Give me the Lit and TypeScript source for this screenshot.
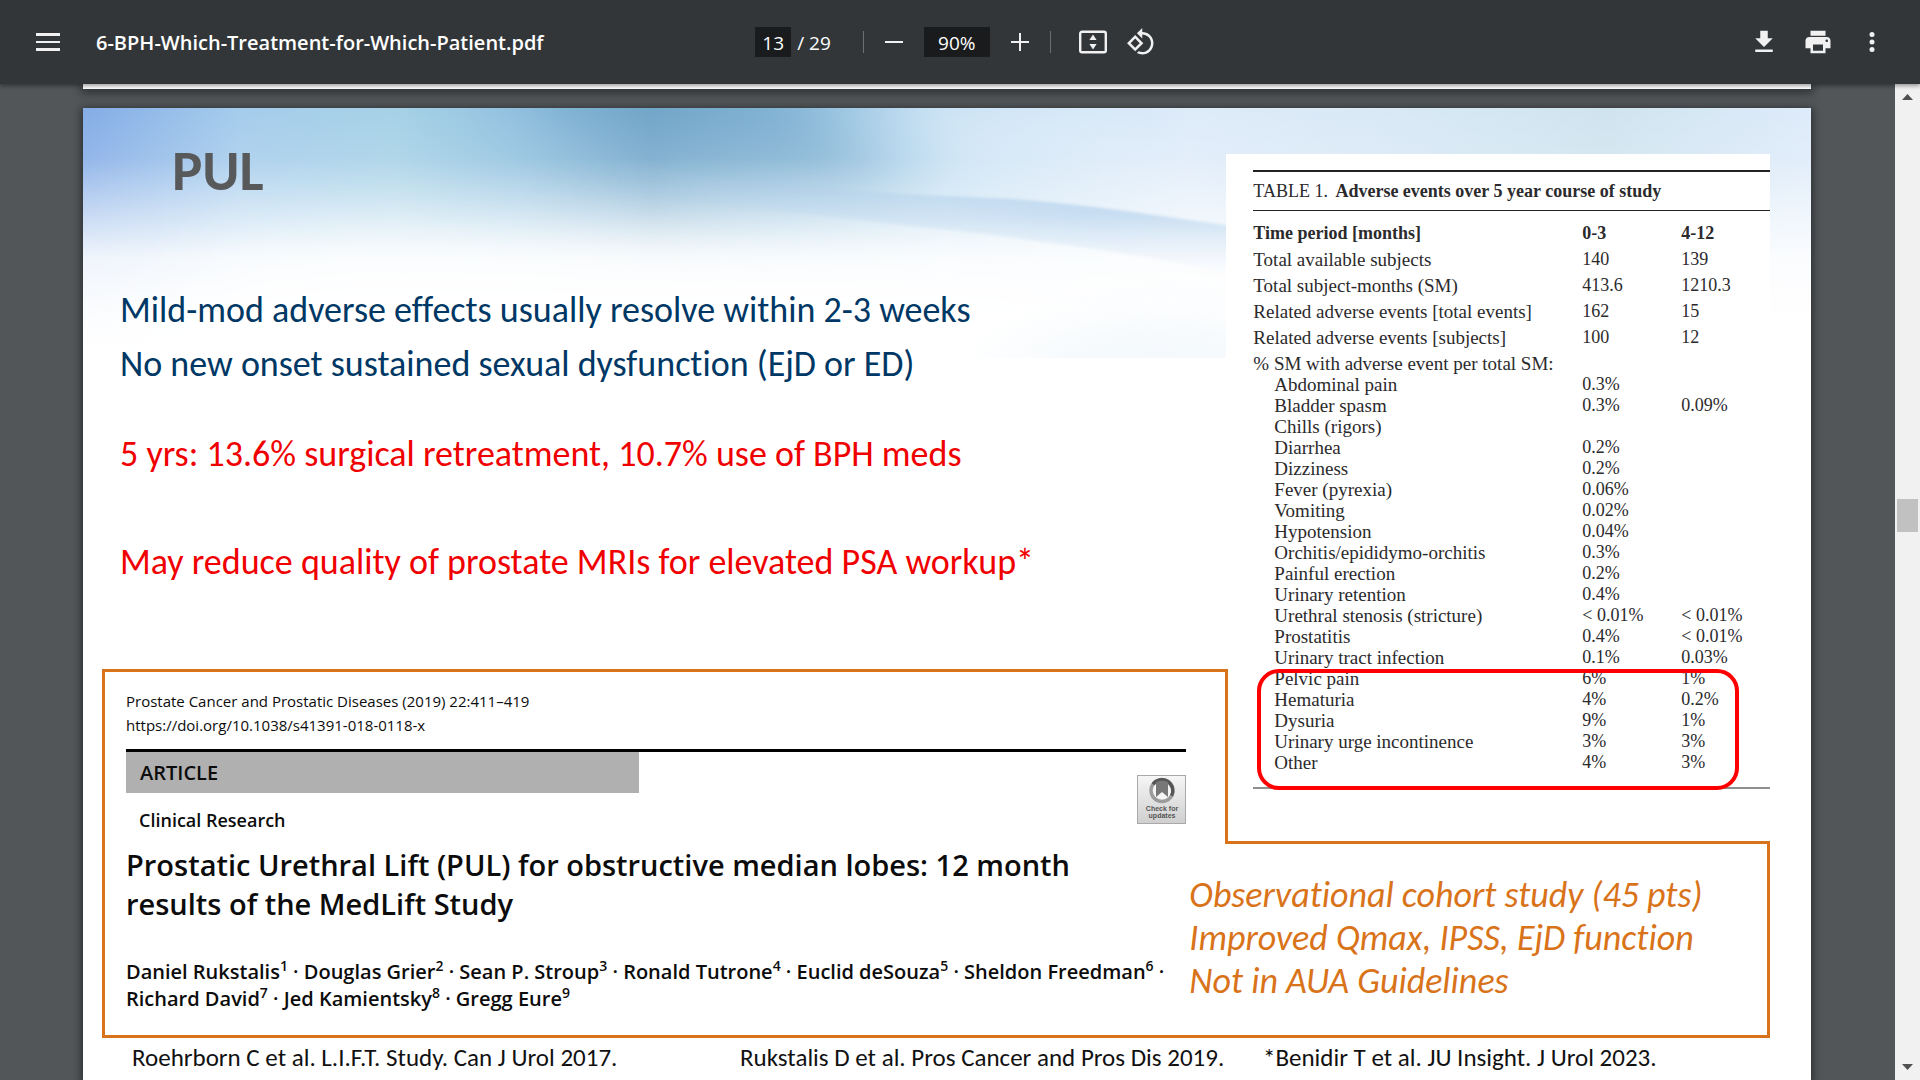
import { LitElement, html, css, svg } from "lit";
import { customElement, property } from "lit/decorators.js";

type Row = { label: string; early: string; late: string; kind: "wide" | "item" };

const wide = (label: string, early = "", late = ""): Row => ({ label, early, late, kind: "wide" });
const item = (label: string, early = "", late = ""): Row => ({ label, early, late, kind: "item" });

const ROWS: Row[] = [
  wide("Total available subjects", "140", "139"),
  wide("Total subject-months (SM)", "413.6", "1210.3"),
  wide("Related adverse events [total events]", "162", "15"),
  wide("Related adverse events [subjects]", "100", "12"),
  wide("% SM with adverse event per total SM:"),
  item("Abdominal pain", "0.3%"),
  item("Bladder spasm", "0.3%", "0.09%"),
  item("Chills (rigors)"),
  item("Diarrhea", "0.2%"),
  item("Dizziness", "0.2%"),
  item("Fever (pyrexia)", "0.06%"),
  item("Vomiting", "0.02%"),
  item("Hypotension", "0.04%"),
  item("Orchitis/epididymo-orchitis", "0.3%"),
  item("Painful erection", "0.2%"),
  item("Urinary retention", "0.4%"),
  item("Urethral stenosis (stricture)", "< 0.01%", "< 0.01%"),
  item("Prostatitis", "0.4%", "< 0.01%"),
  item("Urinary tract infection", "0.1%", "0.03%"),
  item("Pelvic pain", "6%", "1%"),
  item("Hematuria", "4%", "0.2%"),
  item("Dysuria", "9%", "1%"),
  item("Urinary urge incontinence", "3%", "3%"),
  item("Other", "4%", "3%"),
];

const AUTHORS = [
  ["Daniel Rukstalis", "Douglas Grier", "Sean P. Stroup", "Ronald Tutrone", "Euclid deSouza", "Sheldon Freedman"],
  ["Richard David", "Jed Kamientsky", "Gregg Eure"],
];

const ICONS = {
  menu: svg`<path d="M3 6h24v3H3zM3 14h24v2H3zM3 21h24v3H3z"/>`,
  minus: svg`<path d="M6 14h18v2H6z"/>`,
  plus: svg`<path d="M6 14h8V6h2v8h8v2h-8v8h-2v-8H6z"/>`,
  fit: svg`<rect x="2.2" y="4.7" width="25.6" height="20.6" rx="1.8" fill="none" stroke="currentColor" stroke-width="2.4"/><path d="M15 7.5l3.6 5.4h-7.2zM15 22.5l3.6-5.4h-7.2z"/>`,
  rotate: svg`<path transform="scale(1.25)" d="M7.34 6.41L.86 12.9l6.49 6.48 6.49-6.48-6.5-6.49zM3.69 12.9l3.66-3.66L11 12.9l-3.66 3.66-3.65-3.66zm15.67-6.26C17.61 4.88 15.3 4 13 4V.76L8.76 5 13 9.24V6c1.79 0 3.58.68 4.95 2.05 2.73 2.73 2.73 7.17 0 9.9C16.58 19.32 14.79 20 13 20c-.97 0-1.94-.21-2.84-.61l-1.49 1.49C10.02 21.62 11.51 22 13 22c2.3 0 4.61-.88 6.36-2.64 3.52-3.51 3.52-9.21 0-12.72z"/>`,
  download: svg`<path transform="scale(1.25)" d="M19 9h-4V3H9v6H5l7 7 7-7zM5 18v2h14v-2H5z"/>`,
  print: svg`<path transform="scale(1.25)" d="M19 8H5c-1.66 0-3 1.34-3 3v6h4v4h12v-4h4v-6c0-1.66-1.34-3-3-3zm-3 11H8v-5h8v5zm3-7c-.55 0-1-.45-1-1s.45-1 1-1 1 .45 1 1-.45 1-1 1zm-1-9H6v4h12V3z"/>`,
  more: svg`<circle cx="15" cy="7.5" r="2.5"/><circle cx="15" cy="15" r="2.5"/><circle cx="15" cy="22.5" r="2.5"/>`,
};

@customElement("viewer-toolbar")
export class ViewerToolbar extends LitElement {
  @property() name = "";

  static styles = css`
    :host {
      display: grid;
      grid-template-columns: 1fr auto 1fr;
      align-items: center;
      height: 84px;
      padding: 0 28px;
      box-sizing: border-box;
      background: #323639;
      color: #fff;
      font-family: "Open Sans", "Noto Sans", sans-serif;
      box-shadow: 0 -2px 8px rgba(0, 0, 0, 0.1), 0 2px 4px rgba(0, 0, 0, 0.35);
      z-index: 2;
    }
    .left,
    .middle,
    .right {
      display: flex;
      align-items: center;
    }
    .left {
      gap: 28px;
    }
    .middle {
      gap: 10px;
      padding-right: 4px;
    }
    .right {
      gap: 14px;
      justify-content: flex-end;
    }
    .name {
      margin: 0;
      padding-top: 2px;
      font-size: 20px;
      font-weight: 600;
      line-height: 30px;
      white-space: nowrap;
    }
    .button {
      display: grid;
      place-items: center;
      width: 40px;
      height: 40px;
      padding: 0;
      border: 0;
      border-radius: 50%;
      background: none;
      color: #f1f1f1;
    }
    .icon {
      width: 30px;
      height: 30px;
      fill: currentColor;
    }
    .pager {
      display: flex;
      align-items: center;
      gap: 6px;
      padding-right: 22px;
      font-size: 19px;
      line-height: 30px;
      white-space: nowrap;
    }
    .box {
      height: 30px;
      box-sizing: border-box;
      padding: 2px 0 0;
      border: 0;
      background: #191b1c;
      color: #fff;
      font: inherit;
      font-size: 19px;
      text-align: center;
    }
    .total {
      padding-top: 2px;
    }
    .page {
      width: 36px;
    }
    .zoom {
      width: 66px;
    }
    .rule {
      width: 1px;
      height: 22px;
      background: #6b6f72;
    }
    .view {
      display: flex;
      gap: 8px;
      padding-left: 12px;
    }
  `;

  private button(label: string, icon: unknown) {
    return html`<button class="button" type="button" aria-label=${label}>
      <svg class="icon" viewBox="0 0 30 30" aria-hidden="true">${icon}</svg>
    </button>`;
  }

  render() {
    return html`
      <div class="left">
        ${this.button("Menu", ICONS.menu)}
        <h1 class="name">${this.name}</h1>
      </div>
      <div class="middle">
        <div class="pager">
          <input class="box page" aria-label="Page number" value="13" />
          <span class="total">/ 29</span>
        </div>
        <span class="rule"></span>
        ${this.button("Zoom out", ICONS.minus)}
        <input class="box zoom" aria-label="Zoom level" value="90%" />
        ${this.button("Zoom in", ICONS.plus)}
        <span class="rule"></span>
        <div class="view">
          ${this.button("Fit to page", ICONS.fit)} ${this.button("Rotate counterclockwise", ICONS.rotate)}
        </div>
      </div>
      <div class="right">
        ${this.button("Download", ICONS.download)} ${this.button("Print", ICONS.print)}
        ${this.button("More actions", ICONS.more)}
      </div>
    `;
  }
}

@customElement("adverse-table")
export class AdverseTable extends LitElement {
  static styles = css`
    :host {
      display: block;
      position: relative;
      box-sizing: border-box;
      padding: 16px 0 0 27px;
      background: #fff;
      color: #2b2a2c;
      font-family: "Palatino Linotype", "Liberation Serif", serif;
      font-size: 18px;
      line-height: 21px;
    }
    .table {
      width: 100%;
      border-collapse: collapse;
      table-layout: fixed;
      border-bottom: 2px solid #8f8f8f;
    }
    .caption {
      padding: 8px 0;
      border-top: 2px solid #222;
      border-bottom: 1px solid #222;
      line-height: 22px;
      text-align: left;
      white-space: nowrap;
    }
    .title {
      padding-left: 3px;
      font-weight: 700;
    }
    .label {
      width: 329px;
    }
    .early {
      width: 99px;
    }
    .cell {
      padding: 0;
      font-weight: 400;
      text-align: left;
      white-space: nowrap;
    }
    .name {
      font-size: 19px;
    }
    .head .cell {
      padding-top: 12px;
      font-weight: 700;
    }
    .wide .cell {
      padding-top: 5px;
    }
    .item .name {
      padding-left: 21px;
    }
    .last .cell {
      padding-bottom: 14px;
    }
    .mark {
      position: absolute;
      left: 31px;
      right: 31px;
      top: 515px;
      height: 121px;
      box-sizing: border-box;
      border: 4px solid #f00;
      border-radius: 22px;
    }
  `;

  render() {
    return html`
      <table class="table">
        <caption class="caption">
          TABLE 1. <span class="title">Adverse events over 5 year course of study</span>
        </caption>
        <thead>
          <tr class="head">
            <th class="cell label" scope="col">Time period [months]</th>
            <th class="cell early" scope="col">0-3</th>
            <th class="cell" scope="col">4-12</th>
          </tr>
        </thead>
        <tbody>
          ${ROWS.map(
            (row, i) => html`<tr class="${row.kind} ${i === ROWS.length - 1 ? "last" : ""}">
              <th class="cell name" scope="row">${row.label}</th>
              <td class="cell">${row.early}</td>
              <td class="cell">${row.late}</td>
            </tr>`,
          )}
        </tbody>
      </table>
      <div class="mark"></div>
    `;
  }
}

@customElement("journal-article")
export class JournalArticle extends LitElement {
  static styles = css`
    :host {
      display: block;
      padding: 20px 3px 26px 22px;
      color: #0c0c0c;
      font-family: "Open Sans", "Noto Sans", sans-serif;
      font-variant-ligatures: none;
      white-space: nowrap;
    }
    .source {
      margin: 0 0 12px;
      font-size: 15px;
      line-height: 24px;
    }
    .link {
      color: inherit;
      text-decoration: none;
    }
    .band {
      display: grid;
      grid-template-columns: 36fr 35fr auto;
      border-top: 3px solid #000;
    }
    .kind {
      grid-column: 1;
      margin: 0;
      padding-left: 14px;
      background: #b0b0b0;
      font-size: 20px;
      font-weight: 600;
      line-height: 41px;
    }
    .section {
      grid-column: 1;
      margin: 15px 0 0;
      padding-left: 13px;
      font-size: 18px;
      font-weight: 600;
      line-height: 24px;
    }
    .badge {
      grid-column: 3;
      grid-row: 1 / 3;
      width: 49px;
      height: 49px;
      margin-top: 23px;
    }
    .title {
      margin: 13px 0 35px;
      font-size: 29px;
      font-weight: 600;
      line-height: 39px;
    }
    .authors {
      margin: 0;
      font-size: 20px;
      font-weight: 600;
      line-height: 27px;
    }
    .ref {
      font-size: 14px;
      line-height: 0;
      vertical-align: 8px;
    }
    .badge-text {
      font: 700 7px "Liberation Sans", sans-serif;
      fill: #555;
      text-anchor: middle;
    }
  `;

  render() {
    let n = 0;
    return html`
      <p class="source">
        Prostate Cancer and Prostatic Diseases (2019) 22:411–419<br />
        <a class="link" href="https://doi.org/10.1038/s41391-018-0118-x">https://doi.org/10.1038/s41391-018-0118-x</a>
      </p>
      <div class="band">
        <p class="kind">ARTICLE</p>
        <p class="section">Clinical Research</p>
        <svg class="badge" viewBox="0 0 49 49" role="img" aria-label="Check for updates">
          <defs>
            <linearGradient id="plate" x1="0" y1="0" x2="0" y2="1">
              <stop offset="0" stop-color="#f6f6f6" />
              <stop offset="1" stop-color="#cfcfcf" />
            </linearGradient>
          </defs>
          <rect x=".5" y=".5" width="48" height="48" fill="url(#plate)" stroke="#a9a9a9" />
          <circle cx="25" cy="15.5" r="11" fill="#f4f4f4" stroke="#9b9b9b" stroke-width="3.4" />
          <path d="M16 9.2A11 11 0 0 1 34.6 20.8" fill="none" stroke="#555" stroke-width="3.4" />
          <path d="M19 7q6-3 12 0v15l-6-5-6 5z" fill="#777" />
          <text class="badge-text" x="25" y="36">Check for</text>
          <text class="badge-text" x="25" y="43">updates</text>
        </svg>
      </div>
      <h3 class="title">
        Prostatic Urethral Lift (PUL) for obstructive median lobes: 12 month<br />results of the MedLift Study
      </h3>
      <p class="authors">
        ${AUTHORS.map(
          (line, l) => html`${l ? html`<br />` : ""}${line.map((who, i) => {
            n += 1;
            const last = l === AUTHORS.length - 1 && i === line.length - 1;
            return html`${who}<sup class="ref">${n}</sup>${last ? "" : " · "}`;
          })}`,
        )}
      </p>
    `;
  }
}

@customElement("slide-page")
export class SlidePage extends LitElement {
  static styles = css`
    :host {
      display: grid;
      position: relative;
      grid-template-columns: 2fr 38px 1fr;
      grid-template-rows: auto 172px auto auto;
      align-content: start;
      box-sizing: border-box;
      min-height: 972px;
      padding: 0 41px 0 21px;
      background: #fff;
      box-shadow: 0 2px 8px 2px rgba(0, 0, 0, 0.45);
      font-family: Carlito, Lato, sans-serif;
      font-variant-ligatures: none;
      white-space: nowrap;
    }
    .banner {
      position: absolute;
      inset: 0 0 auto 0;
      width: 100%;
      height: 250px;
    }
    .intro,
    .card,
    .article,
    .notes,
    .sources {
      position: relative;
    }
    .intro {
      grid-area: 1 / 1 / 2 / 3;
      padding: 36px 0 80px 16px;
    }
    .heading {
      margin: 0 0 85px;
      padding-left: 52px;
      color: #58595b;
      font-size: 57px;
      font-weight: 700;
      line-height: 54px;
    }
    .points {
      margin: 0;
      padding: 0;
      list-style: none;
      font-size: 36px;
      line-height: 54px;
      color: #003865;
    }
    .alert {
      margin-top: 36px;
      color: #f00000;
    }
    .alert + .alert {
      margin-top: 54px;
    }
    .card {
      grid-area: 1 / 3 / 3 / 4;
      align-self: start;
      margin: 46px 0 0 -1px;
    }
    .frame-a {
      grid-area: 2 / 1 / 4 / 3;
      margin-left: -2px;
      border: 3px solid #d9731a;
      border-right: 0;
    }
    .frame-b {
      grid-area: 2 / 3 / 3 / 4;
      position: relative;
      margin-left: -2px;
      border-left: 3px solid #d9731a;
    }
    .frame-c {
      grid-area: 3 / 3 / 4 / 4;
      margin-left: -2px;
      border: 3px solid #d9731a;
      border-left: 0;
    }
    .article {
      grid-area: 2 / 1 / 4 / 2;
    }
    .notes {
      grid-area: 3 / 2 / 4 / 4;
      margin: 0;
      padding-top: 33px;
      color: #d9731a;
      font-size: 36px;
      font-style: italic;
      line-height: 43px;
    }
    .sources {
      grid-area: 4 / 1 / 5 / 4;
      display: grid;
      grid-template-columns: 608fr 523fr 507fr;
      padding: 5px 0 0 28px;
      color: #111;
      font-size: 25px;
      line-height: 30px;
    }
  `;

  render() {
    return html`
      <svg class="banner" viewBox="0 0 1728 250" preserveAspectRatio="none" aria-hidden="true">
        <defs>
          <linearGradient id="sky">
            <stop offset="0" stop-color="#84ace6" />
            <stop offset=".09" stop-color="#a5ccec" />
            <stop offset=".18" stop-color="#a6d1e6" />
            <stop offset=".25" stop-color="#93c2e0" />
            <stop offset=".33" stop-color="#74a8cb" />
            <stop offset=".41" stop-color="#92c0de" />
            <stop offset=".5" stop-color="#bedcf1" />
            <stop offset=".64" stop-color="#deebf9" />
            <stop offset=".75" stop-color="#d9e9f6" />
            <stop offset=".88" stop-color="#cfe4ef" />
            <stop offset="1" stop-color="#deebfa" />
          </linearGradient>
          <linearGradient id="haze" x1="0" y1="0" x2="0" y2="1">
            <stop offset="0" stop-color="#fff" stop-opacity="0" />
            <stop offset=".2" stop-color="#fff" stop-opacity=".12" />
            <stop offset=".4" stop-color="#fff" stop-opacity=".5" />
            <stop offset=".6" stop-color="#fff" stop-opacity=".88" />
            <stop offset=".85" stop-color="#fff" stop-opacity=".98" />
            <stop offset="1" stop-color="#fff" />
          </linearGradient>
          <linearGradient id="under" x1="0" y1="0" x2="0" y2="1">
            <stop offset="0" stop-color="#a2c6e6" />
            <stop offset=".5" stop-color="#bcd6ee" stop-opacity=".7" />
            <stop offset="1" stop-color="#e4eff9" stop-opacity="0" />
          </linearGradient>
          <linearGradient id="reveal">
            <stop offset="0" stop-color="#000" />
            <stop offset=".7" stop-color="#fff" />
          </linearGradient>
          <mask id="fade"><rect x="520" width="700" height="250" fill="url(#reveal)" /></mask>
          <filter id="soft" x="-20%" y="-50%" width="140%" height="200%">
            <feGaussianBlur stdDeviation="34" />
          </filter>
          <filter id="mist" x="-50%" y="-80%" width="200%" height="260%">
            <feGaussianBlur stdDeviation="26" />
          </filter>
          <filter id="edge" x="-10%" y="-10%" width="120%" height="130%">
            <feGaussianBlur stdDeviation="1.5" />
          </filter>
        </defs>
        <rect width="1728" height="250" fill="url(#sky)" />
        <path d="M420 -20L700 -20L820 90Q600 80 420 -20z" fill="#6ea2c6" opacity=".5" filter="url(#mist)" />
        <path d="M780 -20L1000 -20L1130 90L900 80z" fill="#eaf3fc" opacity=".4" filter="url(#mist)" />
        <rect width="1728" height="250" fill="url(#haze)" />
        <path
          d="M-80 420L60 230Q110 165 240 150C380 140 520 142 640 150C800 160 960 170 1160 196C1400 214 1600 214 1860 194L1860 420z"
          fill="#fff"
          filter="url(#soft)"
        />
        <g mask="url(#fade)">
          <path d="M520 50C700 86 800 84 930 91C1010 97 1080 108 1160 120L1160 170C1000 128 800 120 520 80z" fill="url(#under)" filter="url(#edge)" />
        </g>
        <path d="M880 270L980 230Q1100 200 1200 240V270z" fill="#dcebf6" opacity=".4" filter="url(#mist)" />
      </svg>

      <div class="intro">
        <h2 class="heading">PUL</h2>
        <ul class="points">
          <li>Mild-mod adverse effects usually resolve within 2-3 weeks</li>
          <li>No new onset sustained sexual dysfunction (EjD or ED)</li>
          <li class="alert">5 yrs: 13.6% surgical retreatment, 10.7% use of BPH meds</li>
          <li class="alert">May reduce quality of prostate MRIs for elevated PSA workup*</li>
        </ul>
      </div>
      <adverse-table class="card"></adverse-table>
      <div class="frame-a"></div>
      <div class="frame-b"></div>
      <div class="frame-c"></div>
      <journal-article class="article"></journal-article>
      <p class="notes">
        Observational cohort study (45 pts)<br />Improved Qmax, IPSS, EjD function<br />Not in AUA Guidelines
      </p>
      <div class="sources">
        <span>Roehrborn C et al. L.I.F.T. Study. Can J Urol 2017.</span>
        <span>Rukstalis D et al. Pros Cancer and Pros Dis 2019.</span>
        <span>*Benidir T et al. JU Insight. J Urol 2023.</span>
      </div>
    `;
  }
}

@customElement("app-root")
export class AppRoot extends LitElement {
  static styles = css`
    :host {
      display: grid;
      grid-template-rows: auto 1fr;
      height: 100vh;
      overflow: hidden;
      background: #525659;
    }
    .viewer {
      display: grid;
      grid-template-columns: 1fr 25px;
      min-height: 0;
    }
    .pages {
      display: flex;
      flex-direction: column;
      align-items: center;
      gap: 19px;
      min-height: 0;
      padding-right: 1px;
      overflow: hidden;
    }
    .previous {
      flex: none;
      width: 90vw;
      height: 5px;
      background: #fff;
      box-shadow: 0 2px 8px 2px rgba(0, 0, 0, 0.45);
    }
    .slide {
      flex: none;
      width: 90vw;
    }
    .scroll {
      display: flex;
      flex-direction: column;
      align-items: center;
      padding: 10px 0;
      background: #f1f1f1;
    }
    .arrow {
      width: 11px;
      height: 6px;
      fill: #505050;
    }
    .before {
      flex: 399 0 0;
    }
    .thumb {
      width: 21px;
      height: 33px;
      background: #c1c1c1;
    }
    .after {
      flex: 531 0 0;
    }
  `;

  render() {
    return html`
      <viewer-toolbar name="6-BPH-Which-Treatment-for-Which-Patient.pdf"></viewer-toolbar>
      <div class="viewer">
        <main class="pages">
          <div class="previous"></div>
          <slide-page class="slide"></slide-page>
        </main>
        <div class="scroll" aria-hidden="true">
          <svg class="arrow" viewBox="0 0 11 6"><path d="M0 6L5.500 0L11 6z" /></svg>
          <span class="before"></span>
          <span class="thumb"></span>
          <span class="after"></span>
          <svg class="arrow" viewBox="0 0 11 6"><path d="M0 0L5.500 6L11 0z" /></svg>
        </div>
      </div>
    `;
  }
}
